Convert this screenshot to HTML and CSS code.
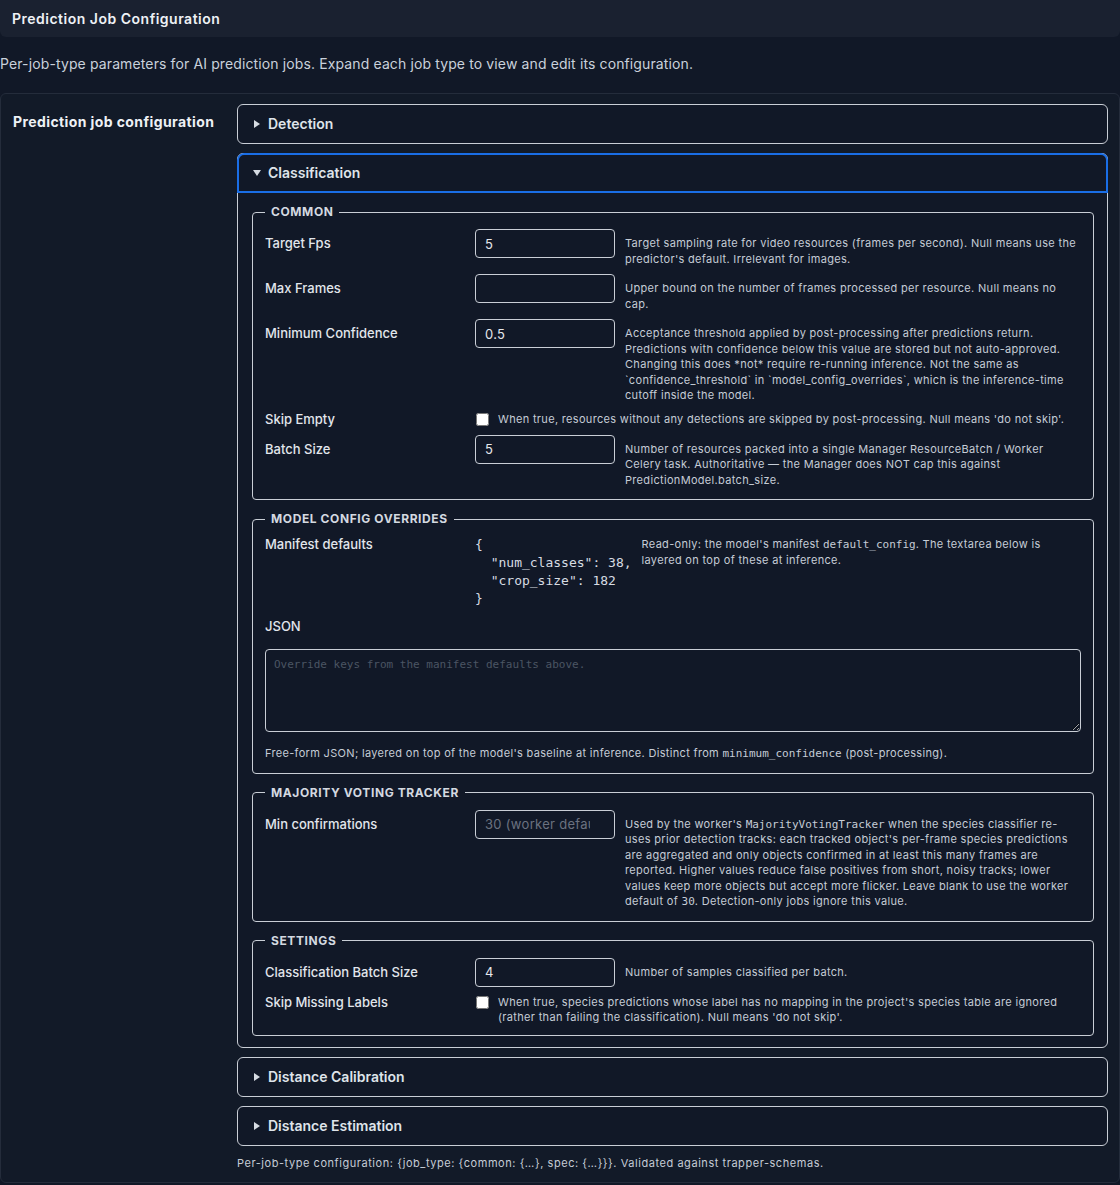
FILE: index.html
```html
<!DOCTYPE html>
<html lang="en">
<head>
    <meta charset="UTF-8">
    <meta name="viewport" content="width=device-width, initial-scale=1.0">
    <title>Prediction Job Configuration</title>
    <link rel="stylesheet" href="styles.css">
</head>
<body>

    <div class="page-header">Prediction Job Configuration</div>

    <p class="intro">Per-job-type parameters for AI prediction jobs. Expand each job type to view and edit its configuration.</p>

    <div class="card">
        <div class="card-label">Prediction job configuration</div>

        <div class="card-body">
            <div class="job-list">

                <details class="job">
                    <summary><svg class="caret" width="10" height="10" viewBox="0 0 10 10"><path d="M2 1 L8 5 L2 9 Z"/></svg>Detection</summary>
                </details>

                <details class="job" open>
                    <summary class="focused"><svg class="caret" width="10" height="10" viewBox="0 0 10 10"><path d="M2 1 L8 5 L2 9 Z"/></svg>Classification</summary>

                    <div class="job-content">

                        <fieldset>
                            <legend>Common</legend>

                            <div class="field">
                                <label for="targetFps">Target Fps</label>
                                <input type="number" id="targetFps" value="5">
                                <div class="help">Target sampling rate for video resources (frames per second). Null means use the predictor's default. Irrelevant for images.</div>
                            </div>

                            <div class="field">
                                <label for="maxFrames">Max Frames</label>
                                <input type="number" id="maxFrames">
                                <div class="help">Upper bound on the number of frames processed per resource. Null means no cap.</div>
                            </div>

                            <div class="field">
                                <label for="minConfidence">Minimum Confidence</label>
                                <input type="number" id="minConfidence" step="0.05" value="0.5">
                                <div class="help">Acceptance threshold applied by post-processing after predictions return. Predictions with confidence below this value are stored but not auto-approved. Changing this does *not* require re-running inference. Not the same as `confidence_threshold` in `model_config_overrides`, which is the inference-time cutoff inside the model.</div>
                            </div>

                            <div class="field check">
                                <label for="skipEmpty">Skip Empty</label>
                                <div class="check-cell">
                                    <input type="checkbox" id="skipEmpty">
                                    <span class="help">When true, resources without any detections are skipped by post-processing. Null means 'do not skip'.</span>
                                </div>
                            </div>

                            <div class="field">
                                <label for="batchSize">Batch Size</label>
                                <input type="number" id="batchSize" value="5">
                                <div class="help">Number of resources packed into a single Manager ResourceBatch / Worker Celery task. Authoritative — the Manager does NOT cap this against PredictionModel.batch_size.</div>
                            </div>
                        </fieldset>

                        <fieldset>
                            <legend>Model config overrides</legend>

                            <div class="field manifest">
                                <label>Manifest defaults</label>
                                <pre class="defaults">{
  "num_classes": 38,
  "crop_size": 182
}</pre>
                                <div class="help">Read-only: the model's manifest <code>default_config</code>. The textarea below is layered on top of these at inference.</div>
                            </div>

                            <label class="json-label" for="overrides">JSON</label>
                            <textarea id="overrides" placeholder="Override keys from the manifest defaults above."></textarea>
                            <div class="help below">Free-form JSON; layered on top of the model's baseline at inference. Distinct from <code>minimum_confidence</code> (post-processing).</div>
                        </fieldset>

                        <fieldset>
                            <legend>Majority voting tracker</legend>

                            <div class="field">
                                <label for="minConfirmations">Min confirmations</label>
                                <input type="number" id="minConfirmations" placeholder="30 (worker default)">
                                <div class="help">Used by the worker's <code>MajorityVotingTracker</code> when the species classifier re-uses prior detection tracks: each tracked object's per-frame species predictions are aggregated and only objects confirmed in at least this many frames are reported. Higher values reduce false positives from short, noisy tracks; lower values keep more objects but accept more flicker. Leave blank to use the worker default of <code>30</code>. Detection-only jobs ignore this value.</div>
                            </div>
                        </fieldset>

                        <fieldset>
                            <legend>Settings</legend>

                            <div class="field">
                                <label for="clsBatchSize">Classification Batch Size</label>
                                <input type="number" id="clsBatchSize" value="4">
                                <div class="help">Number of samples classified per batch.</div>
                            </div>

                            <div class="field check">
                                <label for="skipMissing">Skip Missing Labels</label>
                                <div class="check-cell">
                                    <input type="checkbox" id="skipMissing">
                                    <span class="help">When true, species predictions whose label has no mapping in the project's species table are ignored (rather than failing the classification). Null means 'do not skip'.</span>
                                </div>
                            </div>
                        </fieldset>

                    </div>
                </details>

                <details class="job">
                    <summary><svg class="caret" width="10" height="10" viewBox="0 0 10 10"><path d="M2 1 L8 5 L2 9 Z"/></svg>Distance Calibration</summary>
                </details>

                <details class="job">
                    <summary><svg class="caret" width="10" height="10" viewBox="0 0 10 10"><path d="M2 1 L8 5 L2 9 Z"/></svg>Distance Estimation</summary>
                </details>

            </div>

            <p class="footnote">Per-job-type configuration: {job_type: {common: {…}, spec: {…}}}. Validated against trapper-schemas.</p>
        </div>
    </div>

</body>
</html>
```

FILE: styles.css
```css
body {
    margin: 0;
    font-family: 'Inter', 'Noto Sans', sans-serif;
    background-color: #111827;
    color: #e5e7eb;
}

code, pre, textarea {
    font-family: 'DejaVu Sans Mono', 'Liberation Mono', monospace;
    letter-spacing: 0;
}

.page-header {
    height: 37px;
    line-height: 37px;
    padding: 0 12px;
    background-color: #1a2130;
    border-radius: 0 0 6px 6px;
    font-size: 14px;
    font-weight: 600;
    letter-spacing: 0.5px;
    color: #eef1f5;
}

.intro {
    margin: 17px 0 19px;
    font-size: 14px;
    line-height: 20px;
    letter-spacing: 0.12px;
    color: #c9d1db;
}

.card {
    display: grid;
    grid-template-columns: 212px 1fr;
    column-gap: 12px;
    padding: 10px 11px 11px 12px;
    background-color: #121a28;
    border: 1px solid #242c3b;
    border-radius: 6px;
}

.card-label {
    padding-top: 9px;
    font-size: 14px;
    line-height: 18px;
    font-weight: 700;
    letter-spacing: 0.4px;
    color: #eef1f5;
}

.job-list {
    display: flex;
    flex-direction: column;
    gap: 9px;
}

.job {
    border: 1px solid #c9ced6;
    border-radius: 6px;
    background-color: #111827;
}

.job summary {
    display: flex;
    align-items: center;
    padding: 10px 14px;
    line-height: 18px;
    font-size: 14px;
    font-weight: 600;
    color: #dfe4ea;
    list-style: none;
    cursor: pointer;
}

.job summary::-webkit-details-marker {
    display: none;
}

.job summary.focused {
    outline: 2px solid #1a6ee6;
    outline-offset: -1px;
    border-radius: 6px 6px 0 0;
}

.caret {
    margin-right: 6px;
    fill: #d6dbe2;
}

.job[open] > summary .caret {
    transform: rotate(90deg);
}

.job-content {
    display: flex;
    flex-direction: column;
    gap: 11px;
    padding: 12px 13px 11px 14px;
}

fieldset {
    margin: 0;
    padding: 9px 12px 11px;
    border: 1px solid #c9ced6;
    border-radius: 4px;
}

fieldset:last-child {
    padding-bottom: 9px;
}

legend {
    padding: 0 6px;
    font-size: 12px;
    line-height: 16px;
    font-weight: 700;
    letter-spacing: 0.6px;
    text-transform: uppercase;
    color: #d4d9e0;
}

.field {
    display: grid;
    grid-template-columns: 210px 140px 1fr;
    align-items: start;
    margin-bottom: 7px;
}

.field:last-child {
    margin-bottom: 0;
}

.field label,
.json-label {
    padding-top: 6px;
    font-size: 13px;
    line-height: 17px;
    font-weight: 500;
    color: #e2e6ec;
}

.field input[type="number"] {
    box-sizing: border-box;
    width: 140px;
    height: 29px;
    padding: 0 9px;
    border: 1px solid #c9ced6;
    border-radius: 4px;
    background-color: #111827;
    color: #e5e7eb;
    font-family: inherit;
    font-size: 13px;
    letter-spacing: 0.3px;
}

.field input::placeholder {
    color: #6b7280;
}

.help {
    margin-left: 10px;
    padding-top: 7px;
    font-size: 11px;
    line-height: 15.5px;
    letter-spacing: 0.32px;
    color: #c5ccd6;
}

.help code {
    font-size: 11px;
}

.field.check label {
    padding-top: 0;
}

.check-cell {
    grid-column: 2 / 4;
    display: flex;
    align-items: flex-start;
    padding-top: 1px;
}

.check-cell input {
    width: 13px;
    height: 13px;
    margin: 1px 9px 0 1px;
    flex-shrink: 0;
}

.check-cell .help {
    margin-left: 0;
    padding-top: 0;
}

.manifest {
    grid-template-columns: 210px auto 1fr;
}

.manifest label {
    padding-top: 0;
}

.defaults {
    margin: 0;
    font-size: 13px;
    line-height: 18px;
    color: #d7dce3;
}

.manifest .help {
    padding-top: 1px;
}

.json-label {
    display: block;
    padding-top: 0;
    margin-top: 10px;
}

textarea {
    display: block;
    box-sizing: border-box;
    width: 100%;
    height: 83px;
    margin-top: 14px;
    padding: 8px 8px;
    border: 1px solid #c9ced6;
    border-radius: 4px;
    background-color: #111827;
    color: #e5e7eb;
    font-size: 11px;
}

textarea::placeholder {
    color: #4b5563;
}

.help.below {
    margin: 14px 0 0;
    padding-top: 0;
}

.footnote {
    margin: 9px 0 0;
    font-size: 11px;
    line-height: 16px;
    letter-spacing: 0.55px;
    color: #c5ccd6;
}
```
